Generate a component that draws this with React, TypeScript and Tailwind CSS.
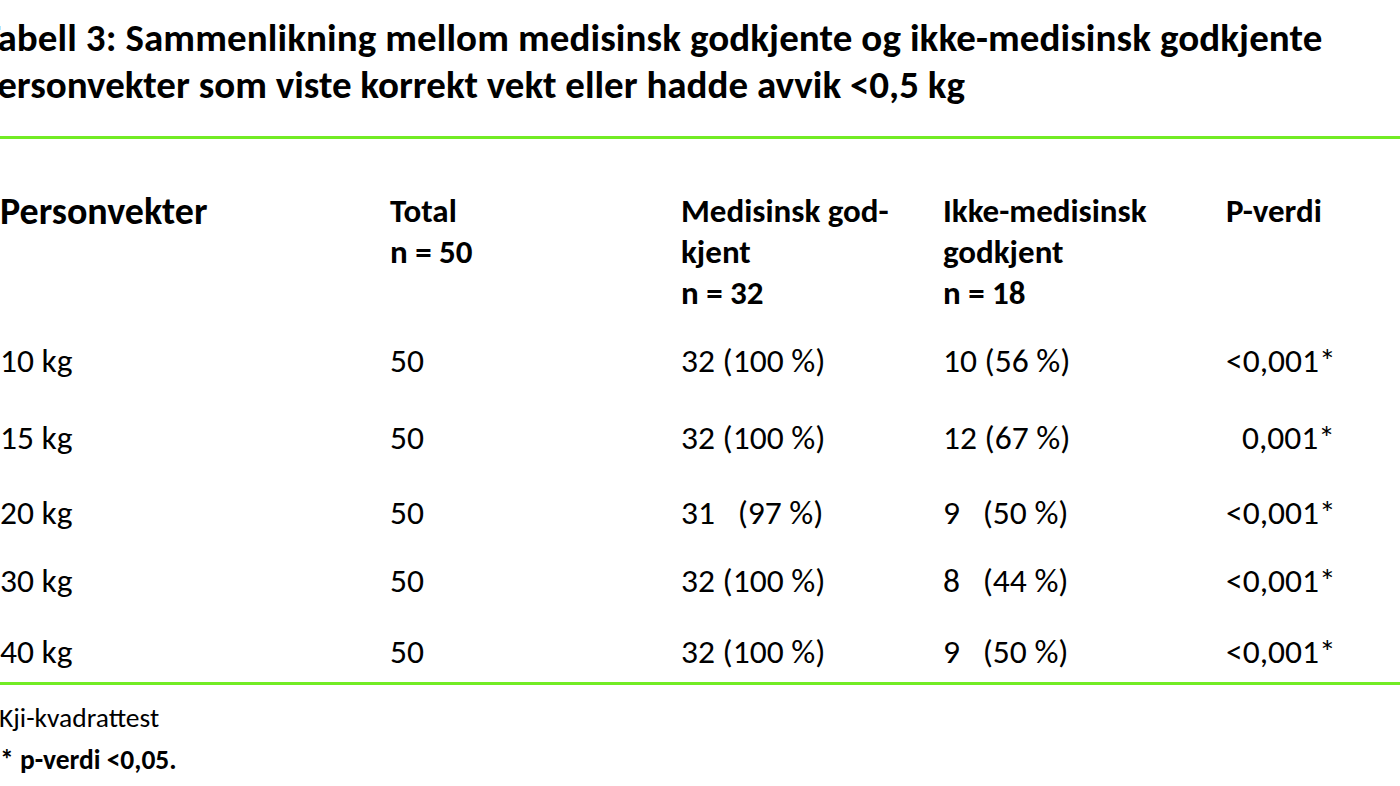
import React from "react";

const font = { fontFamily: "Carlito, Calibri, Lato, 'Open Sans', sans-serif" };

type Row = { label: string; total: string; med: React.ReactNode; ikke: React.ReactNode; p: string; mt: string };

const rows: Row[] = [
  { label: "10 kg", total: "50", med: "32 (100 %)", ikke: "10 (56 %)", p: "<0,001*", mt: "mt-[26px]" },
  { label: "15 kg", total: "50", med: "32 (100 %)", ikke: "12 (67 %)", p: "0,001*", mt: "mt-[36px]" },
  { label: "20 kg", total: "50", med: <>31&nbsp;&nbsp;&nbsp;(97 %)</>, ikke: <>9&nbsp;&nbsp;&nbsp;(50 %)</>, p: "<0,001*", mt: "mt-[34px]" },
  { label: "30 kg", total: "50", med: "32 (100 %)", ikke: <>8&nbsp;&nbsp;&nbsp;(44 %)</>, p: "<0,001*", mt: "mt-[27px]" },
  { label: "40 kg", total: "50", med: "32 (100 %)", ikke: <>9&nbsp;&nbsp;&nbsp;(50 %)</>, p: "<0,001*", mt: "mt-[30px]" },
];

const grid = "grid grid-cols-[390px_291px_262px_283px_109px]";

export default function App() {
  return (
    <div className="w-[1400px] h-[786px] overflow-hidden bg-white text-black" style={font}>
      <div className="pt-[14px] -ml-[19px] text-[39px] leading-[47px] font-bold whitespace-nowrap">
        <div className="tracking-[0.1px]">Tabell 3: Sammenlikning mellom medisinsk godkjente og ikke-medisinsk godkjente</div>
        <div className="-ml-[4px]">Personvekter som viste korrekt vekt eller hadde avvik &lt;0,5 kg</div>
      </div>
      <div className="mt-[28px] h-[3px] bg-[#72ec24]" />
      <div className={`${grid} mt-[52px] text-[33px] leading-[41px] font-bold whitespace-nowrap`}>
        <div className="text-[38px] leading-[41px]">Personvekter</div>
        <div>
          <div>Total</div>
          <div>n = 50</div>
        </div>
        <div>
          <div>Medisinsk god-</div>
          <div>kjent</div>
          <div>n = 32</div>
        </div>
        <div>
          <div>Ikke-medisinsk</div>
          <div>godkjent</div>
          <div>n = 18</div>
        </div>
        <div>P-verdi</div>
      </div>
      {rows.map((r) => (
        <div key={r.label} className={`${grid} ${r.mt} text-[33.5px] leading-[41px] whitespace-nowrap`}>
          <div>{r.label}</div>
          <div>{r.total}</div>
          <div>{r.med}</div>
          <div>{r.ikke}</div>
          <div className="text-right">{r.p}</div>
        </div>
      ))}
      <div className="mt-[10px] h-[3px] bg-[#72ec24]" />
      <div className="mt-[12px] -ml-[1px] text-[27.5px] leading-[42px] whitespace-nowrap">Kji-kvadrattest</div>
      <div className="text-[27.5px] leading-[42px] font-bold whitespace-nowrap">* p-verdi &lt;0,05.</div>
    </div>
  );
}
